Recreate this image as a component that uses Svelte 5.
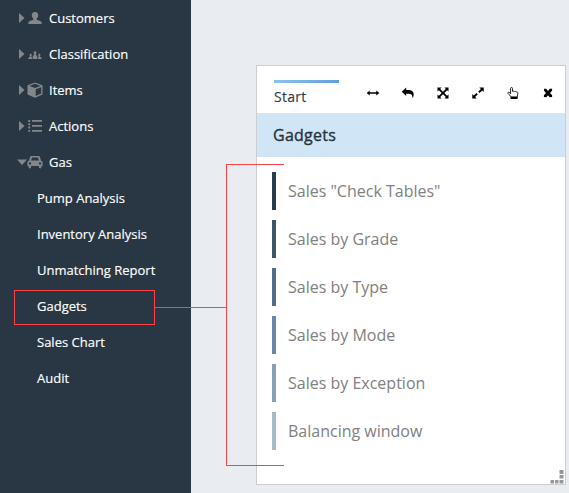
<script>
  const menu = [
    { label: 'Customers', icon: 'user' },
    { label: 'Classification', icon: 'group' },
    { label: 'Items', icon: 'cube' },
    { label: 'Actions', icon: 'list' },
    { label: 'Gas', icon: 'car', open: true }
  ];
  const children = ['Pump Analysis', 'Inventory Analysis', 'Unmatching Report', 'Gadgets', 'Sales Chart', 'Audit'];
  const gadgets = [
    { label: 'Sales "Check Tables"', color: '#2b3c4b' },
    { label: 'Sales by Grade', color: '#3e566b' },
    { label: 'Sales by Type', color: '#4f6e8b' },
    { label: 'Sales by Mode', color: '#6687a8' },
    { label: 'Sales by Exception', color: '#86a0b8' },
    { label: 'Balancing window', color: '#a7b9cb' }
  ];
  const tools = ['width', 'reply', 'arrows', 'expand', 'hand', 'close'];
</script>

<div class="page">
  <nav class="sidebar">
    {#each menu as item}
      <div class="row">
        <svg class="caret" width="11" height="12" viewBox="0 0 11 12">
          {#if item.open}<path d="M0 3.500h10L5 9z" />{:else}<path d="M2 1v10l5.500-5z" />{/if}
        </svg>
        <svg class="icon" width="16" height="16" viewBox="0 0 16 16">
          {#if item.icon === 'user'}
            <path d="M8 2C5.800 2 4.600 3.500 4.800 5.600c.1 1.300.7 2.300 1.500 3v1.200c-1.200.7-3.300 1-4.300 1.800-.6.5-.7 1.200-.7 2.400h13.400c0-1.200-.1-1.900-.7-2.400-1-.8-3.100-1.100-4.300-1.800V8.600c.8-.7 1.400-1.700 1.500-3C11.400 3.500 10.200 2 8 2z" />
          {:else if item.icon === 'group'}
            <path d="M8 5.200a1.400 1.400 0 0 0-1.400 1.600c0 .7.300 1.200.6 1.500v.8c-.9.5-1.500.8-1.500 1.900v2h4.600v-2c0-1.100-.6-1.400-1.500-1.900v-.8c.3-.3.600-.8.600-1.500A1.400 1.400 0 0 0 8 5.200z" />
            <path d="M3.700 7.800c-.7 0-1.100.5-1.100 1.100 0 .5.200.9.500 1.200v.6c-.9.500-1.800.7-1.800 1.500v.8H5v-1.600c-.2-.4-.5-.5-.8-.7v-.6c.3-.3.500-.7.500-1.200 0-.6-.4-1.100-1-1.100zM12.300 7.800c.7 0 1.100.5 1.100 1.100 0 .5-.2.9-.5 1.200v.6c.9.500 1.800.7 1.800 1.500v.8H11v-1.600c.2-.4.500-.5.800-.7v-.6c-.3-.3-.5-.7-.5-1.200 0-.6.4-1.100 1-1.100z" />
          {:else if item.icon === 'cube'}
            <path fill-rule="evenodd" d="M8 .5 15.500 3.200v9.300L8 15.700.5 12.500V3.200zM8 1.800 2.500 3.900 8 6l5.500-2.100zM8.700 7.300v6.700l5.500-2.500V5.200z" />
          {:else if item.icon === 'list'}
            <path d="M1.300 2h1.900v1.900H1.300zM1.300 5.300h1.900v1.900H1.300zM1.300 8.600h1.900v1.900H1.300zM1.300 11.900h1.900v1.900H1.300zM5 2h10v1.800H5zM5 7h10v1.800H5zM5 11.900h10v1.800H5z" />
          {:else}
            <path fill-rule="evenodd" d="M4.500 2h7c.8 0 1.300.5 1.500 1.200l1 3.500c1 .2 1.600.9 1.600 1.800v3.600h-1.200v1c0 .8-.5 1.300-1.200 1.300s-1.300-.5-1.300-1.300v-1H4.100v1c0 .8-.6 1.300-1.300 1.300s-1.200-.5-1.200-1.300v-1H.4V8.500c0-.9.600-1.600 1.600-1.800l1-3.500C3.200 2.500 3.700 2 4.500 2zM5 3.500 4.100 6.600h7.800L11 3.500zM3 8.200a1.200 1.200 0 1 0 0 2.400 1.200 1.200 0 0 0 0-2.400zM13 8.200a1.200 1.200 0 1 0 0 2.400 1.200 1.200 0 0 0 0-2.400z" />
          {/if}
        </svg>
        <span>{item.label}</span>
      </div>
    {/each}
    {#each children as label}
      <div class="row child">{label}</div>
    {/each}
  </nav>

  <main>
    <section class="panel">
      <header>
        <div class="tab">Start</div>
        <div class="tools">
          {#each tools as tool}
            <svg width="14" height="14" viewBox="0 0 14 14">
              {#if tool === 'width'}
                <path d="M.7 7 3.700 4.600v1.700h6.600V4.600L13.300 7l-3 2.400V7.700H3.700v1.700z" />
              {:else if tool === 'reply'}
                <path d="M.8 5.700 5.200 1.600V4h2.300c3.500 0 5.200 1.600 5.200 4.500 0 1.300-.5 2.600-1.300 3.800.3-3.200-.9-4.600-3.900-4.600H5.200v2.400z" />
              {:else if tool === 'arrows'}
                <path d="M1.500 1.500h4L4.200 2.900 7 5.700l2.800-2.800-1.300-1.400h4v4l-1.400-1.300L8.300 7l2.800 2.800 1.400-1.300v4h-4l1.300-1.400L7 8.300l-2.800 2.800 1.300 1.400h-4v-4l1.400 1.300L5.700 7 2.900 4.200 1.500 5.500z" />
              {:else if tool === 'expand'}
                <path d="M8.300 1.500h4.400v4.400l-1.500-1.500-2.700 2.700-1.300-1.300 2.700-2.700zM5.700 12.500H1.300V8.100l1.500 1.500 2.700-2.700 1.300 1.300-2.700 2.700z" />
              {:else if tool === 'hand'}
                <path class="outline" d="M4.600 7.900V2.500c0-1.400 1.900-1.400 1.900 0v2.900c.7-.5 1.600-.4 1.900.2.700-.4 1.400-.2 1.700.4.900-.3 1.800.1 1.800 1.200 0 1.500-.7 2.300-.7 3.900H5.100C4.800 9.600 3 8.900 2 7.600c-.7-1 .6-2 1.500-1.100z" />
                <path d="M4.600 10.700h7v2.400h-7z" />
              {:else}
                <path d="m3.300 2.800 1.900-.1L7 4.900l1.700-2.200h2.400v1.900L9.100 7l2 2.200v1.900l-2.400.1L7 9.300l-1.700 1.900-2.400-.1V9.200l2-2.200-2-2.400z" />
              {/if}
            </svg>
          {/each}
        </div>
      </header>
      <h2>Gadgets</h2>
      <ul>
        {#each gadgets as g}
          <li style="border-color: {g.color}">{g.label}</li>
        {/each}
      </ul>
      <svg class="grip" width="14" height="14" viewBox="0 0 14 14">
        <path d="M9.500 0h4v4h-4zM9.500 5h4v3.500h-4zM9.500 10h4v3.500h-4zM5 10h3.500v3.500H5zM.5 10H4v3.500H.5z" />
      </svg>
    </section>
  </main>

  <div class="highlight"></div>
  <div class="connector"></div>
  <div class="bracket"></div>
</div>

<style>
  :global(body) { margin: 0; }
  .page {
    position: relative;
    display: flex;
    width: 569px;
    height: 493px;
    overflow: hidden;
    background: #e9ecf1;
    font-family: 'Open Sans', 'Noto Sans', sans-serif;
  }
  .sidebar { width: 191px; flex: none; background: #293744; color: #fff; -webkit-text-stroke: 0.15px #fff; }
  .row { display: flex; align-items: center; height: 36px; padding-left: 17px; font-size: 13px; white-space: nowrap; }
  .row span { margin-left: 6px; }
  .row.child { padding-left: 37px; }
  .caret, .icon { flex: none; fill: #848789; }
  .icon { margin-left: -1px; }
  main { flex: 1; padding: 65px 0 0 65px; }
  .panel {
    position: relative;
    box-sizing: border-box;
    width: 310px;
    height: 420px;
    border: 1px solid #ccced1;
    background: #fff;
  }
  header { display: flex; height: 47px; padding-left: 17px; }
  .tab {
    box-sizing: border-box;
    width: 65px;
    height: 29px;
    margin-top: 14px;
    border-top: 3px solid;
    border-image: linear-gradient(90deg, #90c2ec, #5c9fdb) 1;
    color: #303b44;
    font-size: 14px;
    letter-spacing: 0.25px;
    line-height: 28px;
    -webkit-text-stroke: 0.15px #303b44;
  }
  .tools { display: flex; gap: 21px; margin: 20px 0 0 26.5px; }
  .tools svg { fill: #000; }
  .tools .outline { fill: #fff; stroke: #222; stroke-width: 1; }
  h2 { height: 44px; margin: 0; padding-left: 16px; background: #d0e6f6; color: #26323c; font-size: 16px; font-weight: 500; letter-spacing: 0.25px; line-height: 44px; -webkit-text-stroke: 0.35px #26323c; }
  ul { display: flex; flex-direction: column; gap: 10px; margin: 0; padding: 15px 0 0 15px; list-style: none; }
  li { height: 38px; border-left: 4px solid; padding-left: 12px; color: #808080; font-size: 16px; line-height: 38px; }
  .grip { position: absolute; right: 1px; bottom: 0; fill: #97979b; }
  .highlight { position: absolute; left: 14px; top: 290px; width: 139px; height: 33px; border: 1px solid #fb4246; }
  .connector { position: absolute; left: 155px; top: 307px; width: 71px; height: 1px; background: #fb4246; }
  .bracket { position: absolute; left: 226px; top: 164px; width: 57px; height: 300px; border: 1px solid #fb4246; border-right: 0; }
</style>
